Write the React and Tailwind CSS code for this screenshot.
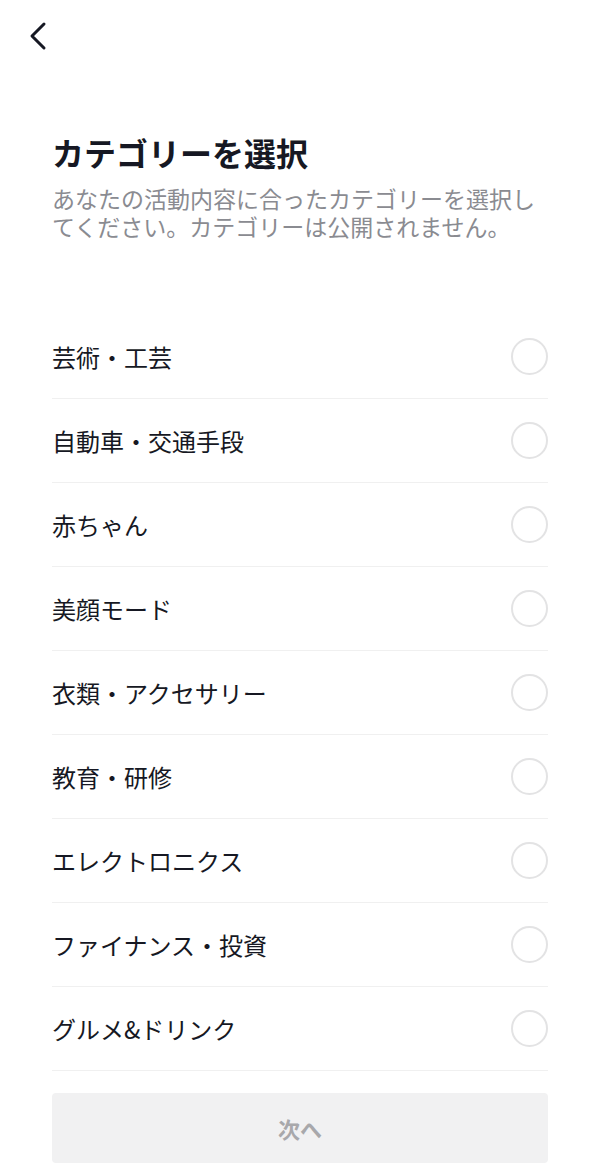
import { useState } from "react";

const categories = [
  "芸術・工芸",
  "自動車・交通手段",
  "赤ちゃん",
  "美顔モード",
  "衣類・アクセサリー",
  "教育・研修",
  "エレクトロニクス",
  "ファイナンス・投資",
  "グルメ&ドリンク",
];

export default function App() {
  const [selected, setSelected] = useState(null);

  return (
    <div
      className="w-[600px] min-h-[1171px] bg-white text-[#161823]"
      style={{ fontFamily: '"Noto Sans CJK JP", "Noto Sans", sans-serif' }}
    >
      <div className="h-[72px] flex items-center pl-[24px]">
        <button className="w-[28px] h-[36px] flex items-center justify-center">
          <svg width="22" height="30" viewBox="0 0 22 30" fill="none">
            <path d="M17 3 L5 15 L17 27" stroke="#161823" strokeWidth="3" strokeLinecap="round" strokeLinejoin="round" />
          </svg>
        </button>
      </div>

      <div className="px-[52px]">
        <h1 className="mt-[60px] text-[32px] leading-[40px] font-bold">カテゴリーを選択</h1>
        <p className="mt-[12px] text-[23px] leading-[28px] text-[#8a8b91]">
          あなたの活動内容に合ったカテゴリーを選択してください。カテゴリーは公開されません。
        </p>

        <ul className="mt-[75px]">
          {categories.map((c, i) => (
            <li
              key={c}
              onClick={() => setSelected(i)}
              className="h-[84px] flex items-center justify-between border-b-[1.5px] border-[#f0f0f0]"
            >
              <span className="text-[24px] leading-[32px]">{c}</span>
              <span
                className={
                  selected === i
                    ? "w-[37px] h-[37px] rounded-full border-[2px] border-[#fe2c55] bg-[#fe2c55]"
                    : "w-[37px] h-[37px] rounded-full border-[2px] border-[#e3e3e4]"
                }
              />
            </li>
          ))}
        </ul>

        <button
          disabled={selected === null}
          className="mt-[22px] w-full h-[70px] rounded-[4px] bg-[#f1f1f2] text-[22px] font-bold text-[#a8a8ab]"
        >
          次へ
        </button>
      </div>
    </div>
  );
}
